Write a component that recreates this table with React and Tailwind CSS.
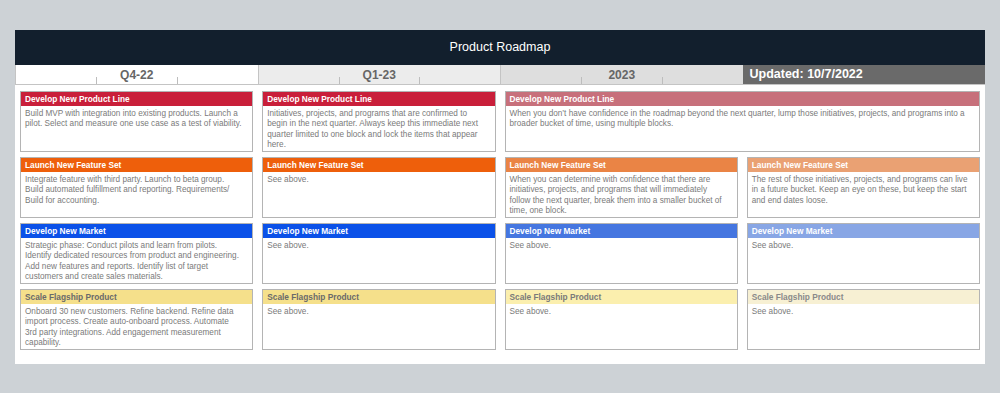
const periods = [
    { label: 'Q4-22', bg: 'bg-white' },
    { label: 'Q1-23', bg: 'bg-[#ececec]' },
    { label: '2023', bg: 'bg-[#dedede]' },
];

const rows = [
    [
        { title: 'Develop New Product Line', head: 'bg-[#c91f3a] text-white', text: 'Build MVP with integration into existing products. Launch a pilot.  Select and measure one use case as a test of viability.' },
        { title: 'Develop New Product Line', head: 'bg-[#c91f3a] text-white', text: 'Initiatives, projects, and programs that are confirmed to begin in the next quarter. Always keep this immediate next quarter limited to one block and lock the items that appear here.' },
        { title: 'Develop New Product Line', head: 'bg-[#c7707b] text-white', text: 'When you don\u2019t have confidence in the roadmap beyond the next quarter, lump those initiatives, projects, and programs into a broader bucket of time, using multiple blocks.', span: true },
    ],
    [
        { title: 'Launch New Feature Set', head: 'bg-[#ee5f0b] text-white', text: 'Integrate feature with third party. Launch to beta group. Build automated fulfillment and reporting. Requirements/ Build for accounting.' },
        { title: 'Launch New Feature Set', head: 'bg-[#ee5f0b] text-white', text: 'See above.' },
        { title: 'Launch New Feature Set', head: 'bg-[#ea8445] text-white', text: 'When you can determine with confidence that there are initiatives, projects, and programs that will immediately follow the next quarter, break them into a smaller bucket of time, one block.' },
        { title: 'Launch New Feature Set', head: 'bg-[#eaa173] text-white', text: 'The rest of those initiatives, projects, and programs can live in a future bucket. Keep an eye on these, but keep the start and end dates loose.' },
    ],
    [
        { title: 'Develop New Market', head: 'bg-[#0b51e8] text-white', text: 'Strategic phase: Conduct pilots and learn from pilots. Identify dedicated resources from product and engineering. Add new features and reports. Identify list of target customers and create sales materials.' },
        { title: 'Develop New Market', head: 'bg-[#0b51e8] text-white', text: 'See above.' },
        { title: 'Develop New Market', head: 'bg-[#4576e0] text-white', text: 'See above.' },
        { title: 'Develop New Market', head: 'bg-[#88a6e5] text-white', text: 'See above.' },
    ],
    [
        { title: 'Scale Flagship Product', head: 'bg-[#f5e08b] text-[#6a6a6a]', text: 'Onboard 30 new customers. Refine backend. Refine data import process. Create auto-onboard process. Automate 3rd party integrations. Add engagement measurement capability.' },
        { title: 'Scale Flagship Product', head: 'bg-[#f5e08b] text-[#6a6a6a]', text: 'See above.' },
        { title: 'Scale Flagship Product', head: 'bg-[#fbefae] text-[#7a7a7a]', text: 'See above.' },
        { title: 'Scale Flagship Product', head: 'bg-[#f7f0d3] text-[#8a8a8a]', text: 'See above.' },
    ],
];

function Card({ title, head, text, span }) {
    return (
        <div className={`flex flex-col bg-white border border-[#b4b4b4] ${span ? 'col-span-2' : ''}`}>
            <div className={`h-[14px] px-[4px] flex items-center text-[8.3px] font-bold leading-none ${head}`}>
                {title}
            </div>
            <div className="pl-[4px] pr-[10px] pt-[3px] text-[8.2px] leading-[10.3px] text-[#7a7a7a]">
                {text}
            </div>
        </div>
    );
}

export default function App() {
    return (
        <div className="w-[1000px] h-[393px] bg-[#cdd2d6] pt-[30px] px-[15px]" style={{ fontFamily: '"Liberation Sans", Arial, sans-serif' }}>
            <div className="bg-white pb-[14px]">
                {/* Title bar */}
                <div className="h-[35px] bg-[#121f2d] flex items-center justify-center text-white text-[12.5px]">
                    Product Roadmap
                </div>

                {/* Timeline */}
                <div className="grid grid-cols-4 h-[20px] border-b border-[#c4c4c4]">
                    {periods.map((p) => (
                        <div key={p.label} className={`relative flex items-center justify-center border-l border-[#c4c4c4] text-[12px] font-bold text-[#666] ${p.bg}`}>
                            {p.label}
                            <span className="absolute bottom-0 left-1/3 h-[7px] border-l border-[#bdbdbd]" />
                            <span className="absolute bottom-0 left-2/3 h-[7px] border-l border-[#bdbdbd]" />
                        </div>
                    ))}
                    <div className="flex items-center bg-[#6a6a6a] pl-[7px] text-white text-[12.5px] font-bold">
                        Updated: 10/7/2022
                    </div>
                </div>

                {/* Cards */}
                <div className="grid grid-cols-4 auto-rows-[61px] gap-x-[9px] gap-y-[5px] px-[5px] pt-[6px]">
                    {rows.flat().map((c, i) => (
                        <Card key={i} {...c} />
                    ))}
                </div>
            </div>
        </div>
    );
}
